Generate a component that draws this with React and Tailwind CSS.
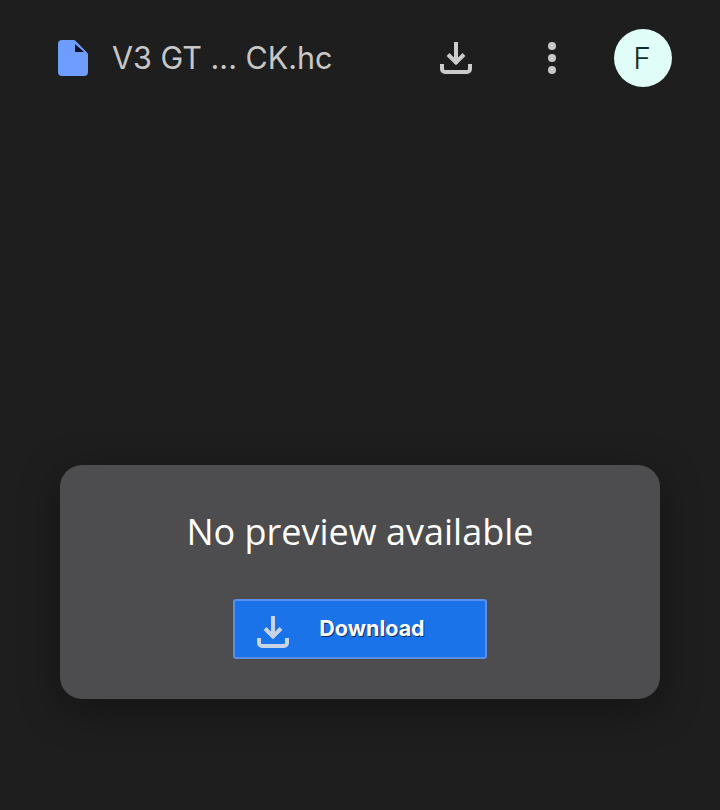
function DownloadGlyph({ color, className }) {
  return (
    <svg width="32" height="32" viewBox="0 0 32 32" fill="none" stroke={color} strokeWidth="4" className={className}>
      <path d="M16 0V22" />
      <path d="M8 12.5L16 20.5L24 12.5" />
      <path d="M2 22V27a3 3 0 0 0 3 3H27a3 3 0 0 0 3-3V22" />
    </svg>
  );
}

export default function App() {
  return (
    <div className="h-[810px] w-[720px] overflow-hidden bg-[#1e1e1e] font-['Inter',sans-serif] flex flex-col">
      <header className="flex h-[116px] items-center pl-[58px] pr-[48px]">
        <svg width="30" height="36" viewBox="0 0 30 36" className="shrink-0">
          <path d="M4 0H15.5a3 3 0 0 1 2.2 1L29 12.5a3 3 0 0 1 1 2.2V32a4 4 0 0 1-4 4H4a4 4 0 0 1-4-4V4a4 4 0 0 1 4-4Z" fill="#6f9cff" />
          <path d="M17 4V12H26Z" fill="#10131c" />
        </svg>
        <span className="ml-[24px] text-[30.5px] leading-none text-[#c7c7c7]">V3 GT ... CK.hc</span>
        <div className="ml-auto flex items-center">
          <DownloadGlyph color="#cbcbcb" className="mr-[76px]" />
          <div className="mr-[58px] flex flex-col gap-[4px]">
            <span className="h-[8px] w-[8px] rounded-full bg-[#c7c7c7]" />
            <span className="h-[8px] w-[8px] rounded-full bg-[#c7c7c7]" />
            <span className="h-[8px] w-[8px] rounded-full bg-[#c7c7c7]" />
          </div>
          <div className="flex h-[58px] w-[58px] items-center justify-center rounded-full bg-[#e0fdf7] pr-[2px] text-[30px] font-light text-[#0f2f2a]">F</div>
        </div>
      </header>
      <main className="flex flex-1 flex-col items-center pt-[349px]">
        <section className="flex h-[234px] w-[600px] flex-col items-center rounded-[22px] bg-[#4d4c4e] pt-[45px] shadow-[0_10px_40px_rgba(0,0,0,0.35)]">
          <h1 className="font-['Open_Sans',sans-serif] text-[36px] leading-[44px] text-white">No preview available</h1>
          <button className="relative mt-[45px] flex h-[60px] w-[254px] items-center justify-center rounded-[3px] border-2 border-[#5a8ee8] bg-[#1a73e8]">
            <DownloadGlyph color="#c9d3e6" className="absolute left-[22px] top-[15px]" />
            <span className="ml-[24px] mb-[2px] text-[21.5px] font-bold text-white [text-shadow:1px_1px_0_#0c2a66]">Download</span>
          </button>
        </section>
      </main>
    </div>
  );
}
